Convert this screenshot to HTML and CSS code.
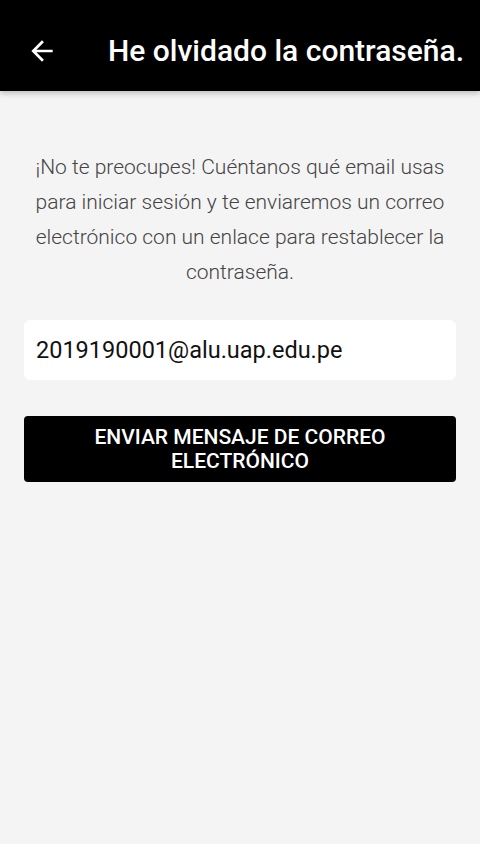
FILE: index.html
```html
<!DOCTYPE html>
<html lang="es">

<head>
    <meta charset="UTF-8">
    <meta name="viewport" content="width=device-width, initial-scale=1.0">
    <title>He olvidado la contraseña</title>
    <link rel="stylesheet" href="styles.css">
</head>

<body>
    <header class="app-bar">
        <button class="back-btn" aria-label="Volver">
            <svg width="32" height="32" viewBox="0 0 24 24">
                <path d="M20 11H7.83l5.59-5.59L12 4l-8 8 8 8 1.41-1.41L7.83 13H20v-2z" fill="#fff" />
            </svg>
        </button>
        <h1>He olvidado la contraseña.</h1>
    </header>

    <main class="content">
        <p class="intro">¡No te preocupes! Cuéntanos qué email usas para iniciar sesión y te enviaremos un correo electrónico con un enlace para restablecer la contraseña.</p>

        <input type="email" class="email-input" value="2019190001@alu.uap.edu.pe">

        <button class="send-btn">ENVIAR MENSAJE DE CORREO ELECTRÓNICO</button>
    </main>
</body>

</html>
```

FILE: styles.css
```css
body {
    font-family: Roboto, "Noto Sans", Arial, sans-serif;
    background-color: #f4f4f4;
    margin: 0;
    height: 844px;
}

.app-bar {
    background-color: #000;
    height: 91px;
    display: flex;
    align-items: center;
    padding: 10px 0 0 0;
    box-sizing: border-box;
    box-shadow: 0 2px 6px rgba(0, 0, 0, 0.25);
}

.back-btn {
    background: none;
    border: none;
    padding: 0;
    margin: 0 0 0 26px;
    width: 32px;
    height: 32px;
    display: flex;
    align-items: center;
    justify-content: center;
    cursor: pointer;
}

.app-bar h1 {
    color: #fff;
    font-size: 30px;
    font-weight: 500;
    margin: 0 0 0 50px;
    line-height: 36px;
    white-space: nowrap;
}

.content {
    padding: 0 24px;
    display: flex;
    flex-direction: column;
}

.intro {
    font-weight: 300;
    font-size: 21px;
    line-height: 35px;
    color: #444;
    text-align: center;
    margin: 59px 4px 0 4px;
}

.email-input {
    margin-top: 30px;
    height: 60px;
    border: none;
    border-radius: 6px;
    background-color: #fff;
    padding: 0 12px;
    font-family: Roboto, Arial, sans-serif;
    font-size: 23.5px;
    color: #111;
    box-sizing: border-box;
}

.send-btn {
    margin-top: 36px;
    height: 66px;
    border: none;
    border-radius: 4px;
    background-color: #000;
    color: #fff;
    font-family: Roboto, Arial, sans-serif;
    font-size: 21px;
    font-weight: 500;
    line-height: 24px;
    padding: 0 60px;
    cursor: pointer;
}
```
